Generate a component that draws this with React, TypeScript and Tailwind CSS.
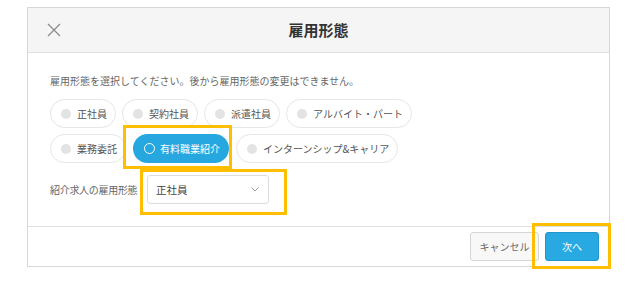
import React from "react";

const font = { fontFamily: '"Noto Sans CJK JP", "Noto Sans", sans-serif' };

function Pill({ label, selected = false }: { label: string; selected?: boolean }) {
  if (selected) {
    return (
      <div className="flex h-[29px] items-center gap-[5px] rounded-full bg-[#27a7df] pr-[9px] pl-[11px] text-[10px] text-white">
        <span className="size-[11px] rounded-full border-[1.5px] border-white" />
        <span>{label}</span>
      </div>
    );
  }
  return (
    <div className="flex h-[29px] items-center gap-[6px] rounded-full border border-[#e6e6e6] bg-white pr-[8px] pl-[10px] text-[10px] text-[#555]">
      <span className="size-[10px] rounded-full bg-[#e3e3e3]" />
      <span>{label}</span>
    </div>
  );
}

function Highlight({ className }: { className: string }) {
  return <div className={`pointer-events-none absolute border-[3px] border-[#ffbf00] ${className}`} />;
}

export default function App() {
  return (
    <div className="relative h-[281px] w-[640px] overflow-hidden bg-white pt-[7px] pl-[27px]" style={font}>
      <div className="w-[583px] border border-[#d8d8d8] bg-white">
        <div className="grid h-[45px] grid-cols-[1fr_auto_1fr] items-center border-b border-[#e0e0e0] bg-[#f5f5f5]">
          <button type="button" className="ml-[19px] flex size-[14px] items-center justify-center" aria-label="閉じる">
            <svg width="14" height="14" viewBox="0 0 14 14" fill="none" stroke="#8a8a8a" strokeWidth="1.2">
              <path d="M1 1l12 12M13 1L1 13" />
            </svg>
          </button>
          <h2 className="text-[15px] font-bold text-[#333]">雇用形態</h2>
          <div />
        </div>

        <div className="px-[22px] pt-[21px] pb-[22px]">
          <p className="text-[10px] leading-[14px] text-[#666]">
            雇用形態を選択してください。後から雇用形態の変更はできません。
          </p>
          <div className="mt-[11px] flex flex-col gap-[6px]">
            <div className="flex gap-[6px]">
              <Pill label="正社員" />
              <Pill label="契約社員" />
              <Pill label="派遣社員" />
              <Pill label="アルバイト・パート" />
            </div>
            <div className="flex gap-[7px]">
              <Pill label="業務委託" />
              <Pill label="有料職業紹介" selected />
              <Pill label="インターンシップ&キャリア" />
            </div>
          </div>
          <div className="mt-[12px] flex items-center gap-[7px]">
            <span className="w-[90px] text-[10px] tracking-[-0.3px] text-[#666]">紹介求人の雇用形態</span>
            <div className="flex h-[29px] w-[122px] items-center justify-between rounded-[3px] border border-[#dcdcdc] bg-white pr-[9px] pl-[8px]">
              <span className="text-[10.5px] text-[#444]">正社員</span>
              <svg width="8" height="5" viewBox="0 0 8 5" fill="none" stroke="#999" strokeWidth="1">
                <path d="M0.5 0.5L4 4l3.5-3.5" />
              </svg>
            </div>
          </div>
        </div>

        <div className="flex h-[40px] items-center justify-end gap-[6px] border-t border-[#e0e0e0] pr-[10px]">
          <button type="button" className="h-[29px] w-[69px] rounded-[3px] border border-[#d6d6d6] bg-[#f8f8f8] text-[10px] text-[#666]">
            キャンセル
          </button>
          <button type="button" className="h-[29px] w-[54px] rounded-[3px] border border-[#1f97cc] bg-[#29a9e1] text-[10px] text-white">
            次へ
          </button>
        </div>
      </div>

      <Highlight className="top-[125px] left-[123px] h-[44px] w-[109px]" />
      <Highlight className="top-[169px] left-[140px] h-[46px] w-[147px]" />
      <Highlight className="top-[223px] left-[532px] h-[46px] w-[79px]" />
    </div>
  );
}
